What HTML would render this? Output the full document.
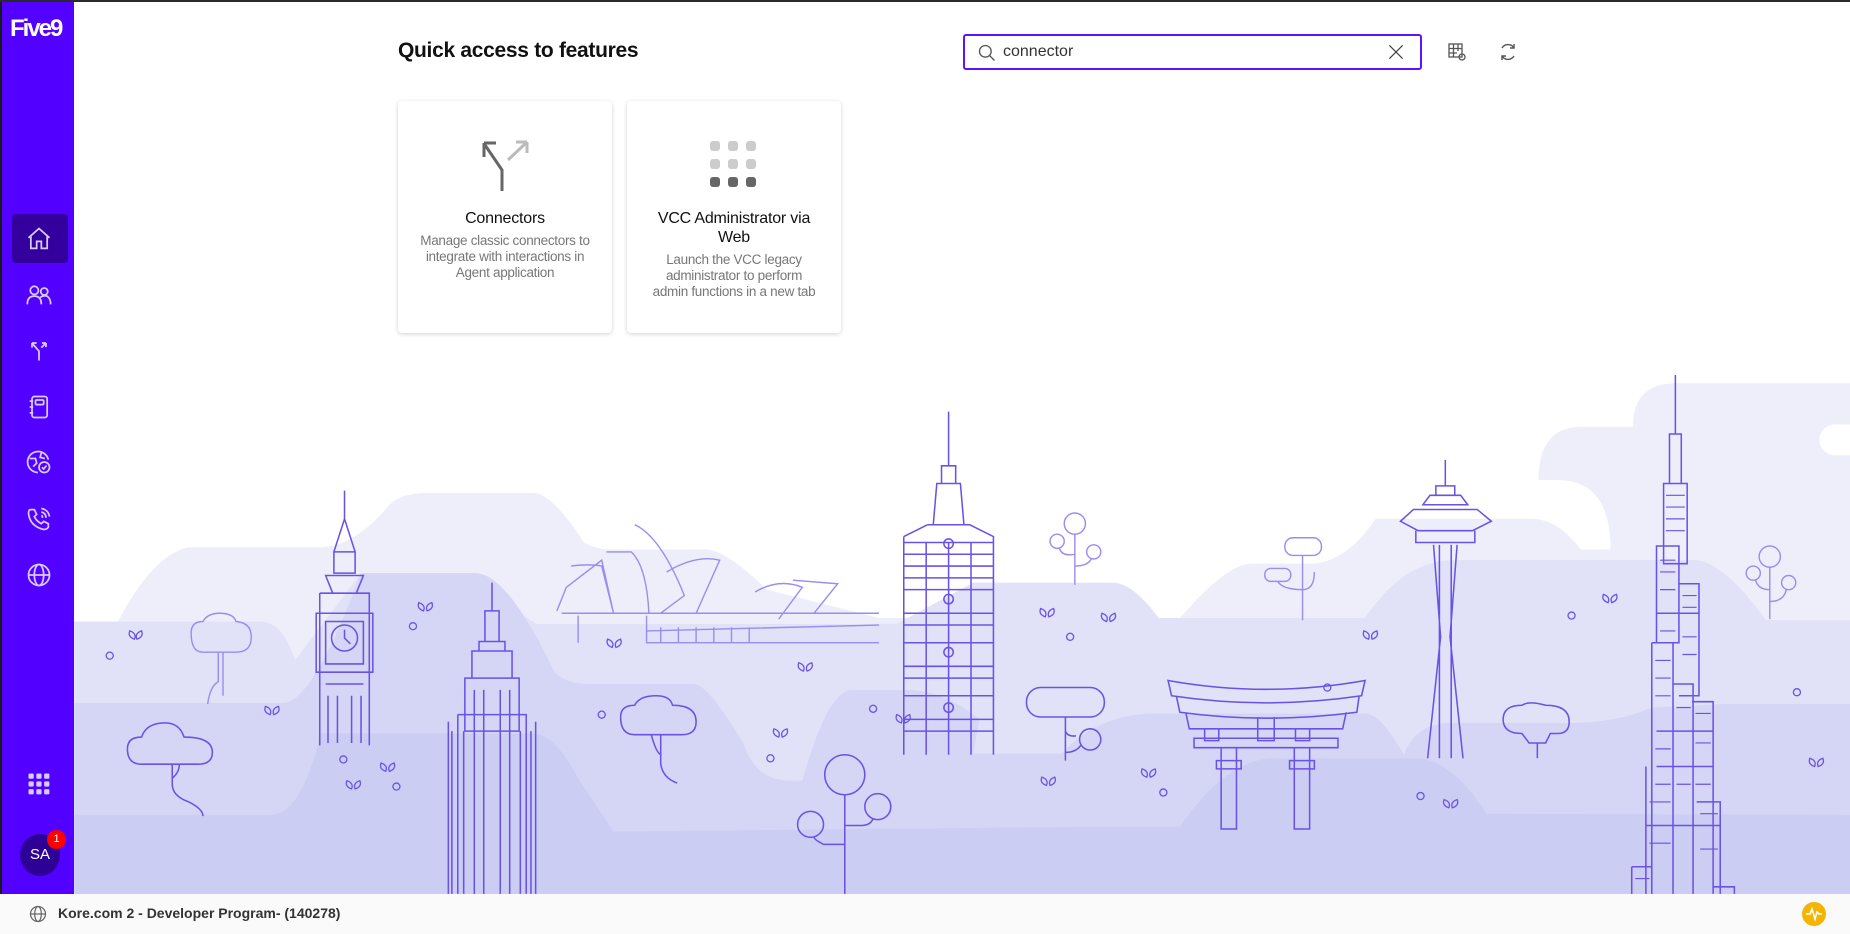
<!DOCTYPE html>
<html><head><meta charset="utf-8"><style>
*{margin:0;padding:0;box-sizing:border-box}
body{width:1850px;height:934px;overflow:hidden;background:#fff;font-family:"Liberation Sans",Arial,sans-serif;position:relative}
#bg{position:absolute;left:0;top:0;width:1850px;height:934px}
.topline{position:absolute;left:0;top:0;width:1850px;height:2px;background:#2a2a2a}
.side{position:absolute;left:0;top:2px;width:74px;height:892px;background:#5200ff;border-left:2px solid #1a1a1a}
.logo{position:absolute;left:8px;top:13px;color:#fff;font-weight:bold;font-size:24px;letter-spacing:-2px}
.ic{position:absolute;left:23px;width:28px;height:28px}
.home{position:absolute;left:10px;top:212px;width:56px;height:49px;background:#33009e;border-radius:4px}
.av{position:absolute;left:18px;top:832px;width:40px;height:42px;border-radius:50%;background:#2d0096;color:#fff;font-size:15px;text-align:center;line-height:42px}
.badge{position:absolute;left:45px;top:828px;width:19px;height:19px;border-radius:50%;background:#f00;color:#fff;font-size:11px;text-align:center;line-height:19px}
.foot{position:absolute;left:0;top:894px;width:1850px;height:40px;background:#fafafa}
.foot span{position:absolute;left:58px;top:11px;font-size:14px;font-weight:bold;color:#333}
h1{position:absolute;left:398px;top:39px;font-size:21px;font-weight:bold;color:#111;letter-spacing:-0.3px}
.search{position:absolute;left:963px;top:34px;width:459px;height:36px;border:2px solid #5c14ff;border-radius:3px;background:#fff}
.search span{position:absolute;left:38px;top:7px;font-size:16px;color:#333}
.card{position:absolute;top:101px;width:214px;height:232px;background:#fff;border-radius:4px;box-shadow:0 1px 4px rgba(0,0,0,.18)}
.card .t{position:absolute;left:22px;right:22px;top:108px;text-align:center;font-size:16px;color:#111;line-height:19px;letter-spacing:-0.2px}
.card .d{position:absolute;left:20px;right:20px;text-align:center;font-size:13.5px;color:#777;line-height:16px;letter-spacing:-0.3px}
</style></head><body>
<svg id="bg" viewBox="0 0 1568 792" preserveAspectRatio="none">
<g stroke="none">
<path fill="#eeeefb" d="M63 527 L100 527 Q130 470 160 464 L272 464 Q300 464 330 428 Q340 418 362 418 L452 418 Q468 418 495 460 Q505 466 520 466 L598 466 Q615 466 650 500 L745 524 L1000 524 Q1040 478 1060 478 L1110 478 Q1140 478 1166 440 L1299 440 Q1320 440 1340 466 L1365 466 Q1365 407 1320 407 L1304 407 Q1304 362 1340 362 L1384 362 Q1384 325 1420 325 L1568 325 L1568 560 L63 560Z"/>
<path fill="#e1e1f8" d="M63 527 L220 527 Q240 527 250 560 L306 486 L403 486 Q420 486 440 520 L455 529 L760 529 L825 494 L943 494 Q960 494 982 524 L1157 524 Q1190 475 1232 475 L1436 475 Q1460 475 1497 526 L1568 526 L1568 792 L63 792Z"/>
<path fill="#d5d6f5" d="M63 596 L240 596 Q265 596 306 486 L403 486 Q430 486 470 570 Q480 580 500 580 L588 580 Q600 580 630 630 Q640 662 670 662 L680 662 Q700 590 720 585 L768 585 Q800 585 830 610 L825 639 L900 639 Q930 605 981 605 L1157 605 Q1170 605 1190 640 Q1200 613 1230 613 L1330 613 Q1370 613 1400 600 L1460 597 L1568 597 L1568 792 L63 792Z"/>
<path fill="#cbcdf3" d="M63 691 L230 691 Q255 691 272 622 L452 622 Q470 622 490 660 L520 705 L930 701 L1000 701 Q1040 643 1080 643 L1200 643 Q1230 643 1260 690 L1568 691 L1568 792 L63 792Z"/>
<path fill="#fff" d="M1555 360 a13 13 0 0 0 0 26 L1568 386 L1568 360Z"/>
</g>
<g fill="none" stroke="#6a52e6" stroke-width="1.3">
<path d="M292 416 L292 440 L283 468 L301 468 L292 440 M283 468 L283 486 L301 486 L301 468 M276 488 L308 488 L302 503 L282 503Z M271 503 L313 503 L313 632 M271 503 L271 632 M268 520 L316 520 L316 570 L268 570Z M276 527 L308 527 L308 563 L276 563Z"/>
<circle cx="292" cy="541" r="11"/><path d="M292 534 L292 541 L297 546 M276 580 L308 580 M278 590 L278 630 M286 590 L286 630 M298 590 L298 630 M306 590 L306 630"/>
<path d="M417 494 L417 518 M411 518 L423 518 L423 544 L411 544Z M406 544 L428 544 L428 552 L406 552Z M400 552 L434 552 L434 575 L400 575Z M394 575 L440 575 L440 620 L394 620Z M388 606 L446 606 L446 758 M388 606 L388 758 M380 612 L380 758 M454 612 L454 758 M383 620 L383 758 M393 620 L393 758 M402 585 L402 758 M410 585 L410 758 M424 585 L424 758 M432 585 L432 758 M441 620 L441 758 M450 620 L450 758"/>
<path d="M804 349 L804 395 M798 395 L810 395 L810 410 L798 410Z M794 410 L814 410 L817 445 L791 445Z M786 445 L822 445 L842 455 L842 640 M766 455 L786 445 M766 455 L766 640 M766 460 L842 460 M766 500 L842 500 M766 545 L842 545 M766 590 L842 590 M766 470 L842 470 M766 480 L842 480 M766 490 L842 490 M766 520 L842 520 M766 530 L842 530 M766 565 L842 565 M766 575 L842 575 M766 610 L842 610 M766 620 L842 620 M785 460 L785 640 M804 460 L804 640 M823 460 L823 640"/>
<circle cx="804" cy="461" r="4"/><circle cx="804" cy="508" r="4"/><circle cx="804" cy="553" r="4"/><circle cx="804" cy="600" r="4"/>
<path d="M990 577 Q1073 592 1157 577 L1154 590 Q1073 602 993 590Z M997 590 L1000 604 Q1073 614 1150 604 L1152 590 M1005 604 L1008 618 L1138 618 L1141 604 M1021 618 L1021 628 L1033 628 L1033 618 M1098 618 L1098 628 L1110 628 L1110 618 M1066 608 L1066 628 L1080 628 L1080 608 M1012 626 L1134 626 L1134 634 L1012 634Z M1035 634 L1035 703 L1048 703 L1048 634 M1097 634 L1097 703 L1110 703 L1110 634 M1031 645 L1052 645 L1052 652 L1031 652Z M1093 645 L1114 645 L1114 652 L1093 652Z"/>
<path d="M1225 390 L1225 412 M1217 412 L1233 412 L1233 420 L1217 420Z M1212 420 L1238 420 L1244 428 L1206 428Z M1198 432 L1252 432 L1264 442 L1248 450 L1202 450 L1187 442Z M1200 450 L1200 460 L1250 460 L1250 450 M1215 462 L1221 540 L1210 643 M1235 462 L1229 540 L1240 643 M1220 462 L1220 643 M1230 462 L1230 643"/>
<path d="M1420 318 L1420 368 M1415 368 L1425 368 L1425 410 L1415 410Z M1410 410 L1430 410 L1430 478 L1410 478Z M1404 463 L1423 463 L1423 545 L1404 545Z M1423 495 L1440 495 L1440 590 L1423 590 M1400 545 L1418 545 L1418 758 M1400 545 L1400 758 M1418 580 L1435 580 L1435 758 M1434 595 L1452 595 L1452 758 M1395 650 L1395 758 M1438 680 L1458 680 L1458 758 M1383 735 L1400 735 L1400 758 M1383 735 L1383 758 M1452 752 L1470 752 L1470 758 M1404 520 L1440 520 M1404 620 L1452 620 M1404 650 L1452 650 M1395 700 L1458 700"/>
<path stroke-width="1" d="M1412 420 L1428 420 M1412 430 L1428 430 M1412 440 L1428 440 M1412 450 L1428 450 M1407 475 L1420 475 M1407 485 L1420 485 M1407 500 L1420 500 M1426 505 L1438 505 M1426 515 L1438 515 M1407 535 L1420 535 M1426 540 L1438 540 M1426 555 L1438 555 M1403 560 L1416 560 M1403 575 L1416 575 M1403 590 L1416 590 M1421 600 L1433 600 M1437 605 L1450 605 M1437 630 L1450 630 M1403 635 L1416 635 M1403 665 L1416 665 M1421 665 L1433 665 M1437 665 L1450 665 M1398 680 L1416 680 M1441 690 L1456 690 M1398 715 L1416 715 M1441 720 L1456 720 M1386 745 L1398 745"/>
<path d="M108 635 Q108 625 120 625 Q124 613 140 613 Q152 613 156 625 Q180 625 180 638 Q180 648 168 648 L120 648 Q108 648 108 635Z M146 648 L146 665 Q146 675 160 680 Q172 686 172 692 M146 660 Q152 655 152 648"/>
<path d="M526 608 Q526 598 538 598 Q542 590 556 590 Q568 590 570 598 Q590 598 590 612 Q590 623 578 623 L538 623 Q526 623 526 608Z M560 623 L560 648 Q562 660 574 664 M560 640 Q556 638 552 623"/>
<circle cx="716" cy="657" r="17"/><circle cx="744" cy="684" r="11"/><circle cx="687" cy="699" r="11"/><path d="M716 674 L716 758 M716 700 L730 700 Q738 700 740 694 M716 716 L698 716 Q690 712 690 710"/>
<rect x="870" y="583" width="66" height="25" rx="12"/><circle cx="924" cy="627" r="9"/><path d="M903 608 L903 645 M903 620 Q905 625 912 624 M903 638 Q912 638 916 632"/>
<path d="M1274 610 Q1274 598 1290 598 Q1296 594 1310 598 Q1330 598 1330 612 Q1330 622 1320 622 L1314 622 L1310 630 L1296 630 L1290 622 Q1274 622 1274 610Z M1303 630 L1303 643"/>
</g>
<g fill="none" stroke="#9a8cf0" stroke-width="1.2">
<path d="M162 537 Q162 527 172 527 Q176 520 186 520 Q198 520 200 527 Q213 528 213 540 Q213 553 200 553 L172 553 Q162 553 162 537Z M185 553 L185 578 Q178 582 176 597 M189 553 L189 590"/>
<circle cx="911" cy="444" r="9"/><circle cx="896" cy="459" r="6"/><circle cx="927" cy="468" r="6"/><path d="M911 453 L911 496 M911 470 Q900 472 898 465 M911 480 Q922 480 925 474"/>
<rect x="1089" y="456" width="31" height="15" rx="7"/><rect x="1072" y="482" width="22" height="11" rx="5"/><path d="M1104 471 L1104 526 M1104 500 Q1114 500 1114 485 M1104 500 Q1087 500 1083 493"/>
<circle cx="1500" cy="472" r="9"/><circle cx="1486" cy="486" r="6"/><circle cx="1516" cy="494" r="6"/><path d="M1500 481 L1500 525 M1500 500 Q1490 500 1488 492 M1500 510 Q1512 510 1514 500"/>
<path d="M472 518 L480 498 L510 475 L520 520 M484 480 Q500 478 510 480 L520 520 M514 468 L535 468 Q548 480 550 520 M538 445 Q560 455 580 505 L560 520 M565 485 Q590 470 610 475 L590 520 M640 502 Q660 490 680 498 L660 525 M672 492 L710 495 L690 520 M476 520 L745 520 M490 522 L490 545 M548 522 L548 545 L745 545 M548 535 L745 530 M560 532 L560 545 M575 532 L575 545 M590 532 L590 545 M605 532 L605 545 M620 532 L620 545 M635 532 L635 545"/>
</g>
<g fill="none" stroke="#6a52e6" stroke-width="1.1">
<circle cx="93" cy="556" r="3"/><circle cx="350" cy="531" r="3"/><circle cx="907" cy="540" r="3"/><circle cx="1332" cy="522" r="3"/><circle cx="291" cy="644" r="3"/><circle cx="336" cy="667" r="3"/><circle cx="510" cy="606" r="3"/><circle cx="740" cy="601" r="3"/><circle cx="653" cy="643" r="3"/><circle cx="986" cy="672" r="3"/><circle cx="1204" cy="675" r="3"/><circle cx="1523" cy="587" r="3"/><circle cx="1125" cy="583" r="3"/>
<path d="M110 535 q-2 5 4 7 q2-5-4-7z M120 535 q2 5-4 7 q-2-5 4-7z M355 511 q-2 5 4 7 q2-5-4-7z M366 511 q2 5-4 7 q-2-5 4-7z M515 542 q-2 5 4 7 q2-5-4-7z M526 542 q2 5-4 7 q-2-5 4-7z M225 599 q-2 5 4 7 q2-5-4-7z M236 599 q2 5-4 7 q-2-5 4-7z M294 662 q-2 5 4 7 q2-5-4-7z M305 662 q2 5-4 7 q-2-5 4-7z M323 647 q-2 5 4 7 q2-5-4-7z M334 647 q2 5-4 7 q-2-5 4-7z M677 562 q-2 5 4 7 q2-5-4-7z M688 562 q2 5-4 7 q-2-5 4-7z M760 606 q-2 5 4 7 q2-5-4-7z M771 606 q2 5-4 7 q-2-5 4-7z M656 618 q-2 5 4 7 q2-5-4-7z M667 618 q2 5-4 7 q-2-5 4-7z M882 516 q-2 5 4 7 q2-5-4-7z M893 516 q2 5-4 7 q-2-5 4-7z M934 520 q-2 5 4 7 q2-5-4-7z M945 520 q2 5-4 7 q-2-5 4-7z M1156 535 q-2 5 4 7 q2-5-4-7z M1167 535 q2 5-4 7 q-2-5 4-7z M1359 504 q-2 5 4 7 q2-5-4-7z M1370 504 q2 5-4 7 q-2-5 4-7z M883 659 q-2 5 4 7 q2-5-4-7z M894 659 q2 5-4 7 q-2-5 4-7z M968 652 q-2 5 4 7 q2-5-4-7z M979 652 q2 5-4 7 q-2-5 4-7z M1224 678 q-2 5 4 7 q2-5-4-7z M1235 678 q2 5-4 7 q-2-5 4-7z M1534 643 q-2 5 4 7 q2-5-4-7z M1545 643 q2 5-4 7 q-2-5 4-7z"/>
</g>
</svg>
<div class="topline"></div>
<div class="side">
<div class="logo">Five9</div>
<div class="home"></div>
<svg class="ic" style="top:223px" viewBox="0 0 24 24" fill="none" stroke="#d8ccff" stroke-width="1.5"><path d="M3 11 L12 3 L21 11 M5 9.5 V20 H10 V14 H14 V20 H19 V9.5"/></svg>
<svg class="ic" style="top:279px" viewBox="0 0 24 24" fill="none" stroke="#d8ccff" stroke-width="1.5"><circle cx="8" cy="8" r="3.5"/><circle cx="16.5" cy="9" r="3"/><path d="M2 20 Q2 13 8 13 Q14 13 14 20 M13 14 Q16 12 19 13 Q22 15 22 20"/></svg>
<svg class="ic" style="top:334px" viewBox="0 0 24 24" fill="none" stroke="#d8ccff" stroke-width="1.5"><path d="M12 21 V13 L6 6 M6 6 V10 M6 6 H10 M14 10 L18 6 M18 6 H14.5 M18 6 V9.5"/></svg>
<svg class="ic" style="top:391px" viewBox="0 0 24 24" fill="none" stroke="#d8ccff" stroke-width="1.5"><rect x="6" y="3" width="13" height="18" rx="2"/><rect x="9" y="6" width="7" height="4" rx="1"/><path d="M4 7 H7 M4 12 H7 M4 17 H7"/></svg>
<svg class="ic" style="top:446px" viewBox="0 0 24 24" fill="none" stroke="#d8ccff" stroke-width="1.5"><path d="M20 10 A9 9 0 1 0 11 21 M4 9 H9 L10 13 L7 16 M14 4 L13 8 L17 9"/><circle cx="16.5" cy="16.5" r="4.5"/><path d="M14.5 16.5 L16 18 L18.5 15"/></svg>
<svg class="ic" style="top:503px" viewBox="0 0 24 24" fill="none" stroke="#d8ccff" stroke-width="1.5"><path d="M5 4 L8 4 L10 8 L8 10 Q10 14 14 16 L16 14 L20 16 L20 19 Q19 21 16 21 Q4 18 3 7 Q3 4 5 4Z M14 3 Q20 4 21 10 M14 6 Q18 7 18 11 M14 9 Q15 9 15 11"/></svg>
<svg class="ic" style="top:559px" viewBox="0 0 24 24" fill="none" stroke="#d8ccff" stroke-width="1.5"><circle cx="12" cy="12" r="9"/><ellipse cx="12" cy="12" rx="4" ry="9"/><path d="M3 12 H21"/></svg>
<svg class="ic" style="top:768px" viewBox="0 0 24 24" fill="#d8ccff"><rect x="3" y="3" width="4.5" height="4.5" rx="1"/><rect x="9.7" y="3" width="4.5" height="4.5" rx="1"/><rect x="16.4" y="3" width="4.5" height="4.5" rx="1"/><rect x="3" y="9.7" width="4.5" height="4.5" rx="1"/><rect x="9.7" y="9.7" width="4.5" height="4.5" rx="1"/><rect x="16.4" y="9.7" width="4.5" height="4.5" rx="1"/><rect x="3" y="16.4" width="4.5" height="4.5" rx="1"/><rect x="9.7" y="16.4" width="4.5" height="4.5" rx="1"/><rect x="16.4" y="16.4" width="4.5" height="4.5" rx="1"/></svg>
<div class="av">SA</div><div class="badge">1</div>
</div>
<div class="foot">
<svg style="position:absolute;left:28px;top:10px" width="20" height="20" viewBox="0 0 24 24" fill="none" stroke="#666" stroke-width="1.5"><circle cx="12" cy="12" r="9"/><ellipse cx="12" cy="12" rx="4" ry="9"/><path d="M3 12 H21"/></svg>
<span>Kore.com 2 - Developer Program- (140278)</span>
<svg style="position:absolute;left:1802px;top:8px" width="24" height="24" viewBox="0 0 24 24"><circle cx="12" cy="12" r="12" fill="#f5b400"/><path d="M4 12 H8 L10 7 L13 17 L15 10 L17 12 H20" fill="none" stroke="#fff" stroke-width="1.6"/></svg>
</div>
<h1>Quick access to features</h1>
<div class="search">
<svg style="position:absolute;left:12px;top:7px" width="20" height="20" viewBox="0 0 24 24" fill="none" stroke="#555" stroke-width="1.6"><circle cx="10" cy="10" r="7"/><path d="M15 15 L21 21"/></svg>
<span>connector</span>
<svg style="position:absolute;left:421px;top:6px" width="20" height="20" viewBox="0 0 24 24" fill="none" stroke="#444" stroke-width="1.5"><path d="M4 4 L20 20 M20 4 L4 20"/></svg>
</div>
<svg style="position:absolute;left:1445px;top:40px" width="24" height="24" viewBox="0 0 24 24" fill="none" stroke="#555" stroke-width="1.3"><rect x="4" y="4" width="13" height="13"/><path d="M4 8.5 H17 M4 13 H12 M8.5 4 V17 M13 4 V11"/><circle cx="17" cy="17" r="3"/></svg>
<svg style="position:absolute;left:1496px;top:40px" width="24" height="24" viewBox="0 0 24 24" fill="none" stroke="#555" stroke-width="1.4"><path d="M18 8 A7 7 0 0 0 6 8 M6 16 A7 7 0 0 0 18 16 M18 4 V8 H14 M6 20 V16 H10"/></svg>
<div class="card" style="left:398px">
<svg style="position:absolute;left:76px;top:36px" width="60" height="56" viewBox="0 0 60 56"><path d="M28 54 V33 L11 8 M10 6 V20 M10 6 H22" fill="none" stroke="#666" stroke-width="3"/><path d="M34 23 L53 5 M53 5 H42 M53 5 V16" fill="none" stroke="#bbb" stroke-width="3"/></svg>
<div class="t">Connectors</div>
<div class="d" style="top:132px">Manage classic connectors to integrate with interactions in Agent application</div>
</div>
<div class="card" style="left:627px">
<svg style="position:absolute;left:81px;top:40px" width="52" height="50" viewBox="0 0 52 50"><g fill="#ccc"><rect x="2" y="0" width="10" height="10" rx="3"/><rect x="20" y="0" width="10" height="10" rx="3"/><rect x="38" y="0" width="10" height="10" rx="3"/><rect x="2" y="18" width="10" height="10" rx="3"/><rect x="20" y="18" width="10" height="10" rx="3"/><rect x="38" y="18" width="10" height="10" rx="3"/></g><g fill="#666"><rect x="2" y="36" width="10" height="10" rx="3"/><rect x="20" y="36" width="10" height="10" rx="3"/><rect x="38" y="36" width="10" height="10" rx="3"/></g></svg>
<div class="t">VCC Administrator via Web</div>
<div class="d" style="top:151px">Launch the VCC legacy administrator to perform admin functions in a new tab</div>
</div>
</body></html>
